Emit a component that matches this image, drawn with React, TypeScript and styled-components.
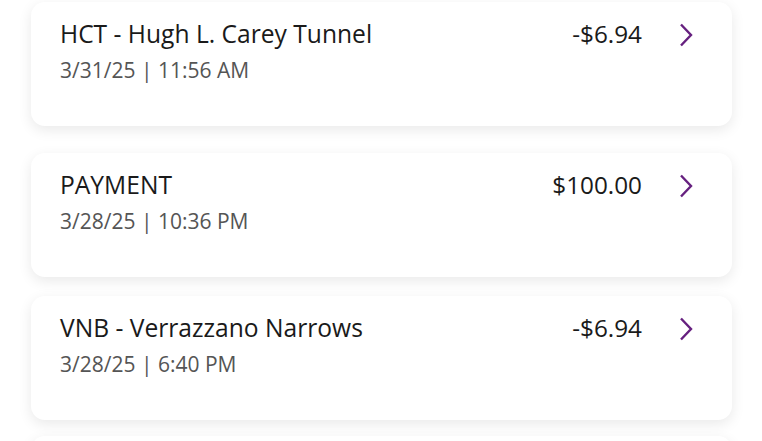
import React from 'react';
import styled, { createGlobalStyle } from 'styled-components';

const GlobalStyle = createGlobalStyle`
  html, body {
    margin: 0;
    padding: 0;
    background: #ffffff;
    font-family: "Open Sans", "Noto Sans", sans-serif;
  }
`;

const List = styled.div`
  display: flex;
  flex-direction: column;
  padding: 2px 30px 0 31px;
`;

const Card = styled.div<{ $gapAfter: number }>`
  display: flex;
  align-items: flex-start;
  height: 124px;
  box-sizing: border-box;
  padding: 17px 38px 0 29px;
  margin-bottom: ${(p) => p.$gapAfter}px;
  background: #ffffff;
  border-radius: 14px;
  box-shadow: 0 4px 14px rgba(0, 0, 0, 0.09);
`;

const Info = styled.div`
  flex: 1;
  display: flex;
  flex-direction: column;
  gap: 8px;
`;

const Title = styled.div`
  font-size: 24.6px;
  line-height: 30px;
  color: #1a1a1a;
`;

const Stamp = styled.div`
  font-size: 21px;
  line-height: 26px;
  color: #555555;
`;

const Amount = styled.div`
  font-size: 24.3px;
  line-height: 30px;
  color: #1a1a1a;
  margin-right: 36px;
`;

const Chevron = styled.svg`
  width: 16px;
  height: 24px;
  margin-top: 4px;
  flex-shrink: 0;
`;

type Txn = { title: string; stamp: string; amount: string; gap: number };

const txns: Txn[] = [
  { title: 'HCT - Hugh L. Carey Tunnel', stamp: '3/31/25 | 11:56 AM', amount: '-$6.94', gap: 27 },
  { title: 'PAYMENT', stamp: '3/28/25 | 10:36 PM', amount: '$100.00', gap: 19 },
  { title: 'VNB - Verrazzano Narrows', stamp: '3/28/25 | 6:40 PM', amount: '-$6.94', gap: 16 },
];

export default function App() {
  return (
    <>
      <GlobalStyle />
      <List>
        {txns.map((t) => (
          <Card key={t.title} $gapAfter={t.gap}>
            <Info>
              <Title>{t.title}</Title>
              <Stamp>{t.stamp}</Stamp>
            </Info>
            <Amount>{t.amount}</Amount>
            <Chevron viewBox="0 0 16 24">
              <path d="M3 1.5 L13 12 L3 22.5" fill="none" stroke="#66207f" strokeWidth="2.4" />
            </Chevron>
          </Card>
        ))}
        <Card $gapAfter={0} />
      </List>
    </>
  );
}
